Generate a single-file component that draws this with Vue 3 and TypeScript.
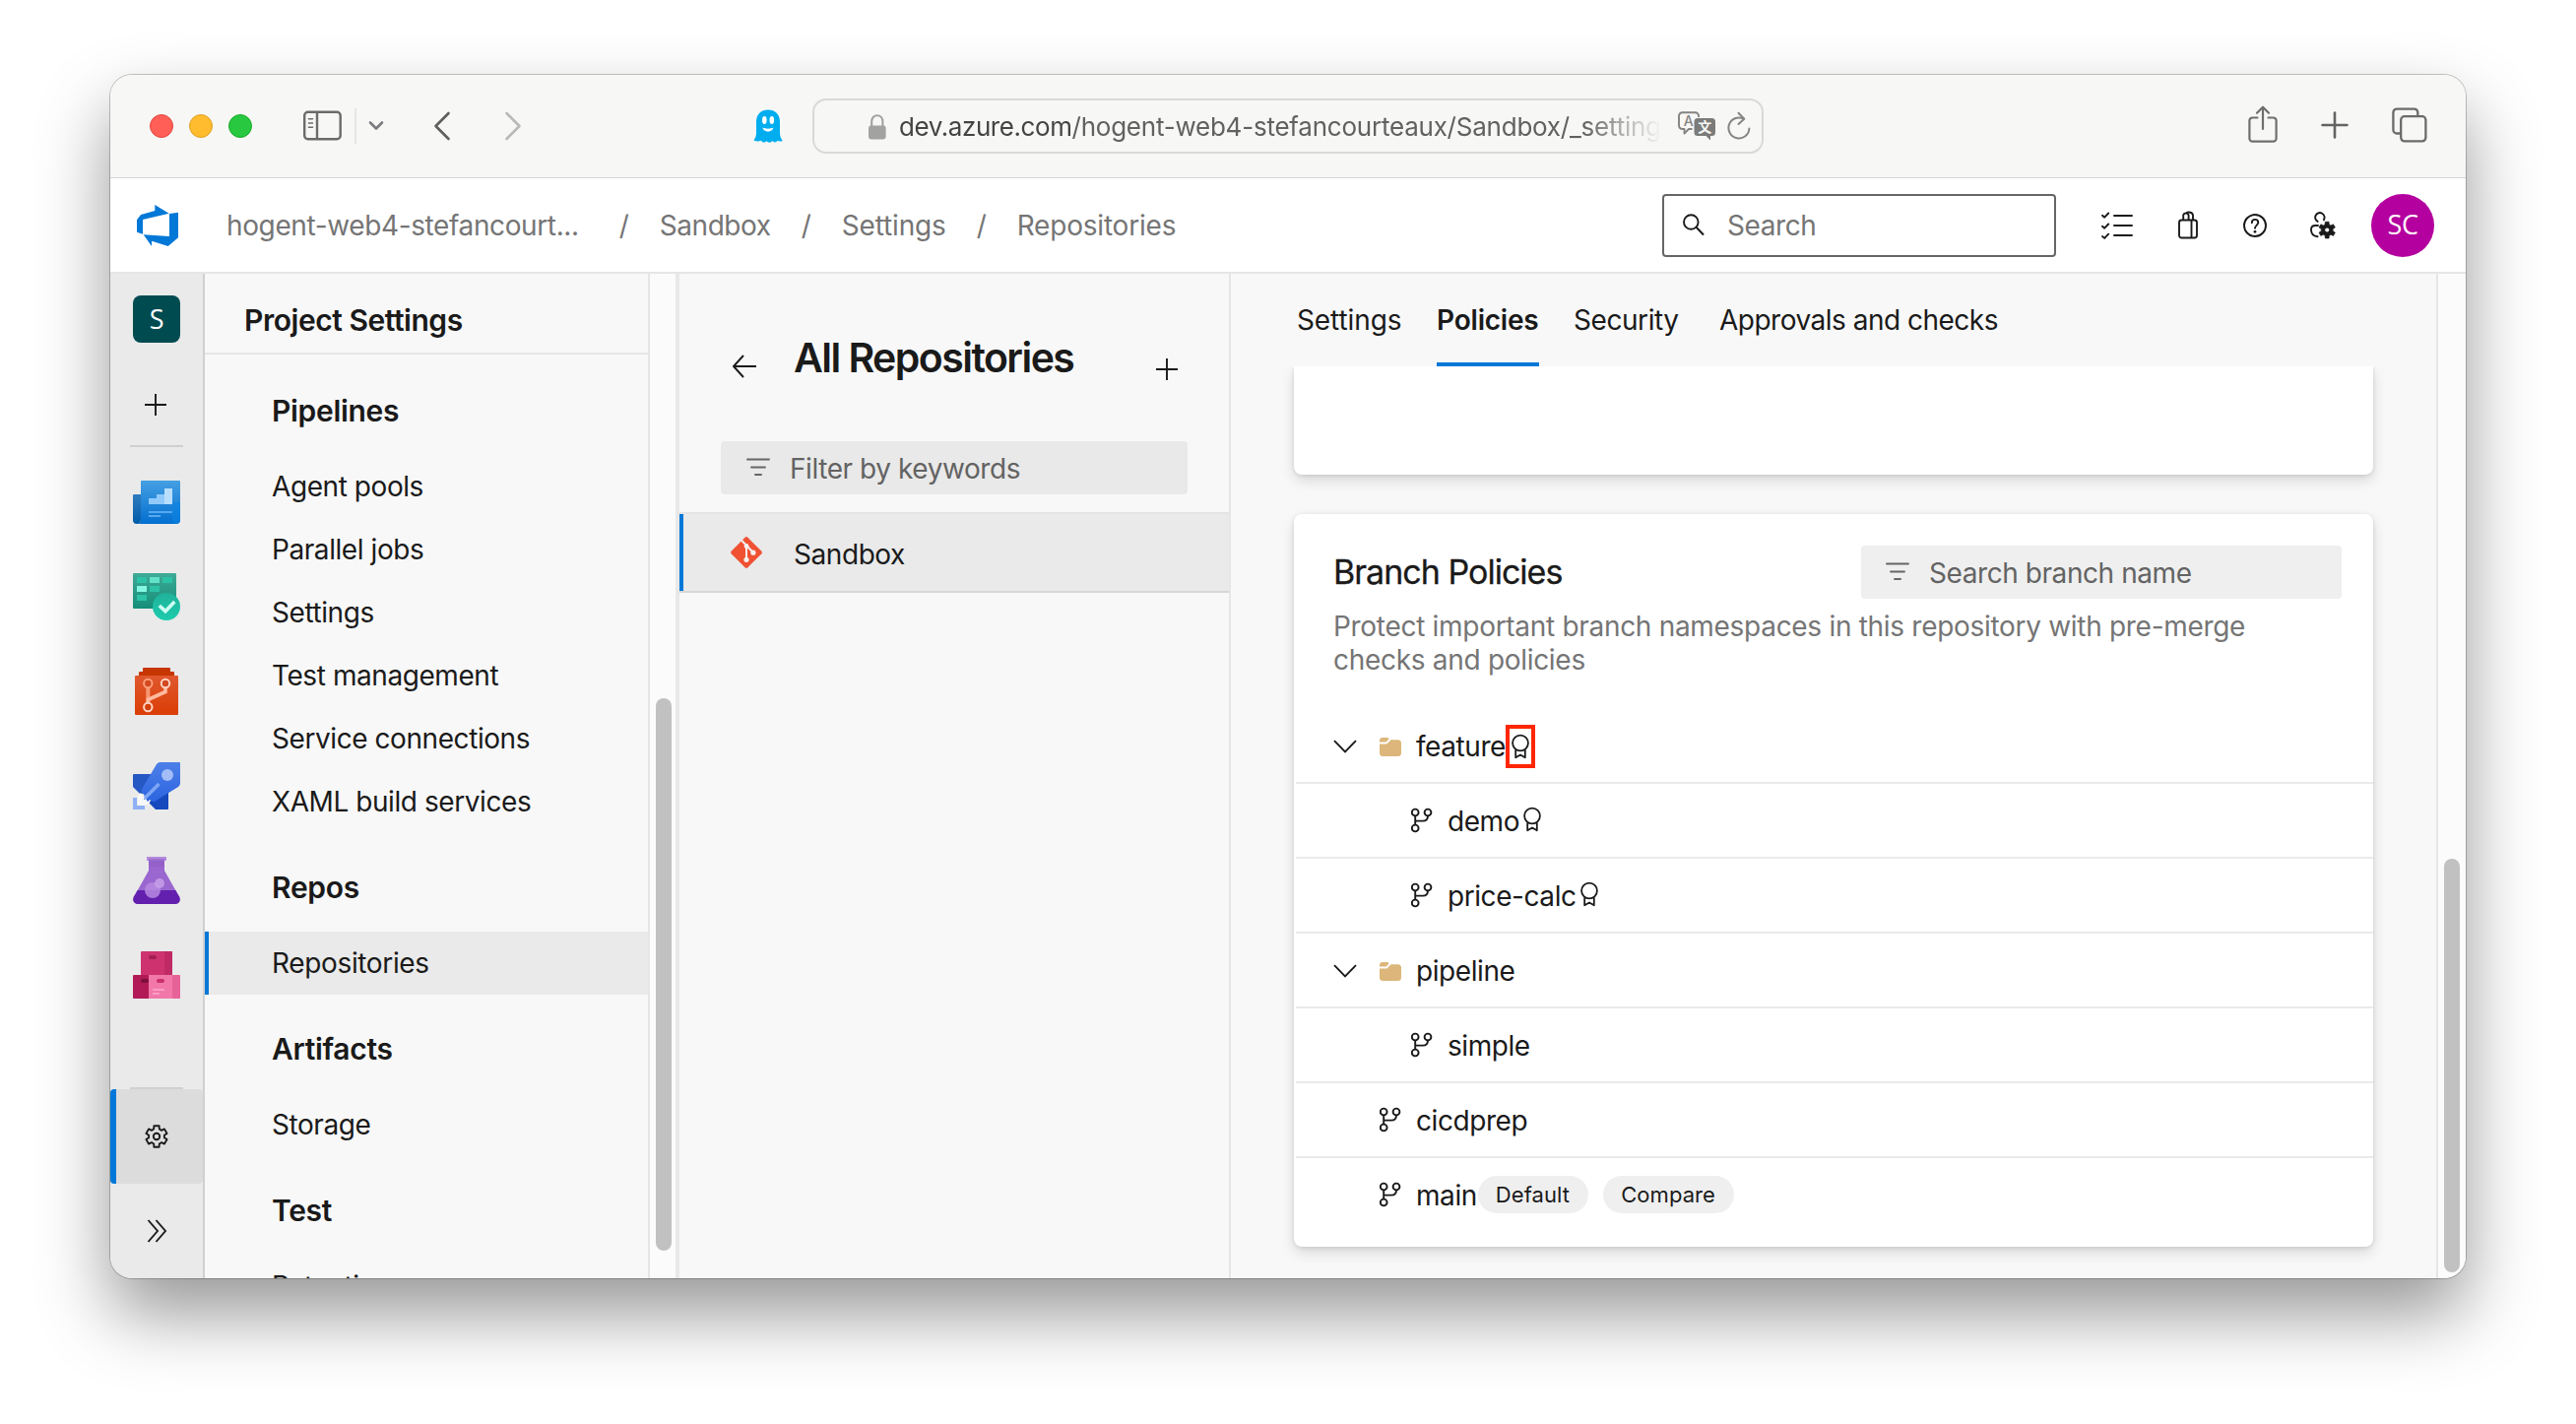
<script setup lang="ts">
interface Branch {
  name: string
  level: 0 | 1
  folder?: boolean
  policy?: boolean
  highlighted?: boolean
  pills?: string[]
}

const crumbs: string[] = ['hogent-web4-stefancourt...', 'Sandbox', 'Settings', 'Repositories']

const navGroups: { title: string; items: string[] }[] = [
  {
    title: 'Pipelines',
    items: ['Agent pools', 'Parallel jobs', 'Settings', 'Test management', 'Service connections', 'XAML build services'],
  },
  { title: 'Repos', items: ['Repositories'] },
  { title: 'Artifacts', items: ['Storage'] },
  { title: 'Test', items: ['Retention'] },
]
const activeNav = 'Repositories'

const tabs: string[] = ['Settings', 'Policies', 'Security', 'Approvals and checks']
const activeTab = 'Policies'

const branches: Branch[] = [
  { name: 'feature', level: 0, folder: true, policy: true, highlighted: true },
  { name: 'demo', level: 1, policy: true },
  { name: 'price-calc', level: 1, policy: true },
  { name: 'pipeline', level: 0, folder: true },
  { name: 'simple', level: 1 },
  { name: 'cicdprep', level: 0 },
  { name: 'main', level: 0, pills: ['Default', 'Compare'] },
]

/** Outline of a six-toothed gear centred on (c, c). */
function gearPath(c: number, outer: number, inner: number, top: number, root: number): string {
  const pts: string[] = []
  for (let i = 0; i < 6; i++) {
    const a = (i * Math.PI) / 3 - Math.PI / 2
    const corners: [number, number][] = [[a - root, inner], [a - top, outer], [a + top, outer], [a + root, inner]]
    for (const [t, r] of corners) pts.push(`${(c + r * Math.cos(t)).toFixed(2)} ${(c + r * Math.sin(t)).toFixed(2)}`)
  }
  return `M${pts.join('L')}Z`
}
const gear = gearPath(13, 11, 8, 0.24, 0.36)
const smallGear = gearPath(9, 8.6, 6, 0.22, 0.36)
</script>

<template>
  <div class="desktop">
    <svg class="defs" width="0" height="0">
      <symbol id="branch" viewBox="0 0 22 26">
        <g fill="none" stroke="#1a1a1a" stroke-width="1.9">
          <circle cx="4.2" cy="5" r="3.4" /><circle cx="17" cy="5" r="3.4" /><circle cx="4.2" cy="21" r="3.4" />
          <path d="M4.2 8.4V17.6M17 8.4c0 3.600-1.400 5.200-5 5.200H4.200" />
        </g>
      </symbol>
      <symbol id="ribbon" viewBox="0 0 20 26">
        <g fill="none" stroke="#1a1a1a" stroke-width="1.8">
          <circle cx="10" cy="9.500" r="7.900" />
          <path d="M5.200 16.200V24.300L10 21.500L14.800 24.300V16.200" stroke-linejoin="round" />
        </g>
      </symbol>
      <symbol id="filter" viewBox="0 0 24 18">
        <path d="M1 1.500H23M5 9.500H19M9 17H15" fill="none" stroke="#666" stroke-width="1.900" stroke-linecap="round" />
      </symbol>
      <symbol id="plus" viewBox="0 0 22 22">
        <path d="M11 0V22M0 11H22" stroke="#1a1a1a" stroke-width="1.900" />
      </symbol>
    </svg>

    <div class="window">
      <header class="toolbar">
        <span class="light red"></span><span class="light amber"></span><span class="light green"></span>
        <svg class="t-side" width="40" height="32" viewBox="0 0 40 32">
          <g fill="none" stroke="#6b6b6a" stroke-width="2.400">
            <rect x="1.200" y="1.700" width="36.500" height="27.600" rx="3.600" /><path d="M14 1.500V29.500" />
            <path d="M5.500 8.700H9.500M5.500 13H9.500M5.500 17.300H9.500" stroke-width="1.600" stroke-linecap="round" />
          </g>
        </svg>
        <span class="t-sep"></span>
        <svg class="t-chev" width="16" height="12" viewBox="0 0 16 12"><path d="M2 2.500L8 8.500L14 2.500" fill="none" stroke="#7b7b7f" stroke-width="2.600" stroke-linecap="round" stroke-linejoin="round" /></svg>
        <svg class="t-back" width="18" height="30" viewBox="0 0 18 30"><path d="M15.500 2L2.500 15L15.500 28" fill="none" stroke="#5e5e5d" stroke-width="2.600" stroke-linecap="round" stroke-linejoin="round" /></svg>
        <svg class="t-fwd" width="18" height="30" viewBox="0 0 18 30"><path d="M2.500 2L15.500 15L2.500 28" fill="none" stroke="#b9b9b8" stroke-width="2.600" stroke-linecap="round" stroke-linejoin="round" /></svg>
        <svg class="t-ghost" width="30" height="34" viewBox="0 0 30 34">
          <path d="M3 12.500C3 5 8 .4 15 .4S27 5 27 12.500V24c0 3.500 1 5 2.600 8-2 .8-3.300.7-4.900-.3-1.500 2.200-4 2.300-5.300.3-1.500 2.300-4.600 2.300-6 0-1.400 2.200-4 2.100-5.600-.2C5.500 33 3 32.700.4 31.600 2.400 28.600 3 27 3 24z" fill="#00aef0" />
          <ellipse cx="11.300" cy="11" rx="2.300" ry="4" fill="#fff" /><ellipse cx="18.800" cy="11" rx="2.300" ry="4" fill="#fff" />
          <path d="M9.300 18.500C12 20 18 20 20.500 18.500 19.500 24 10.500 24 9.300 18.500z" fill="#fff" />
        </svg>
        <div class="address">
          <svg class="lock" width="18" height="26" viewBox="0 0 18 26">
            <rect x="0" y="11.500" width="17.600" height="14" rx="2.400" fill="#a2a2a1" />
            <path d="M3.200 12V7.500C3.200 3.700 5.500 1.200 8.800 1.200S14.400 3.700 14.400 7.500V12" fill="none" stroke="#a2a2a1" stroke-width="2.100" />
          </svg>
          <div class="url"><span class="host">dev.azure.com</span><span class="path">/hogent-web4-stefancourteaux/Sandbox/_setting</span></div>
          <svg class="translate" width="38" height="30" viewBox="0 0 38 30">
            <path d="M21 6V5A3.500 3.500 0 0 0 17.500 1.200H4.500A3.500 3.500 0 0 0 1 4.700V14.500A3.500 3.500 0 0 0 4.500 18H6.500V22.500L11 18H14.500" fill="none" stroke="#838382" stroke-width="1.900" stroke-linejoin="round" />
            <path d="M20 7H34.500A3.500 3.500 0 0 1 38 10.500V21.500A3.500 3.500 0 0 1 34.500 25H33V29.500L28.500 25H20A3.500 3.500 0 0 1 16.500 21.500V10.500A3.500 3.500 0 0 1 20 7z" fill="#7b7b7a" />
            <text x="10.800" y="14.500" text-anchor="middle" class="g-latin">A</text>
            <text x="27.300" y="21.300" text-anchor="middle" class="g-cjk">文</text>
          </svg>
          <svg class="reload" width="24" height="30" viewBox="0 0 24 30">
            <path d="M16.500 7.500A10.500 10.500 0 1 0 22.400 17.500" fill="none" stroke="#858584" stroke-width="2" stroke-linecap="round" />
            <path d="M11.500 1.800L17.300 7.700L11.500 13" fill="none" stroke="#858584" stroke-width="2" stroke-linecap="round" stroke-linejoin="round" />
          </svg>
        </div>
        <svg class="t-share" width="30" height="38" viewBox="0 0 30 38">
          <g fill="none" stroke="#6f6f6e" stroke-width="2.200" stroke-linecap="round" stroke-linejoin="round">
            <path d="M9.500 12.500H4.500A3 3 0 0 0 1.400 15.500V33.500A3 3 0 0 0 4.500 36.600H25.500A3 3 0 0 0 28.600 33.500V15.500A3 3 0 0 0 25.500 12.500H20.500" />
            <path d="M15 24V2M9 7.700L15 1.700L21 7.700" />
          </g>
        </svg>
        <svg class="t-plus" width="28" height="28" viewBox="0 0 28 28"><path d="M14 1.500V26.500M1.500 14H26.500" stroke="#636362" stroke-width="2.600" stroke-linecap="round" /></svg>
        <svg class="t-tabs" width="36" height="36" viewBox="0 0 36 36">
          <g fill="none" stroke="#6b6b6a" stroke-width="2.300">
            <rect x="9.200" y="9.200" width="25.200" height="25.200" rx="3.600" />
            <path d="M9 26.500H5A3.600 3.600 0 0 1 1.400 22.900V5.200A3.600 3.600 0 0 1 5 1.600H22.700A3.600 3.600 0 0 1 26.300 5.200V9" />
          </g>
        </svg>
      </header>

      <div class="topbar">
        <svg class="logo" width="42" height="42" viewBox="0 0 42 42" fill="#0078d7">
          <path d="M0 15.300L4 10L18.300 6V0L32.700 8.700L6 15V29.700L0 27.700z" />
          <path d="M33 9L42 7.700V33.300L31.700 42L15 36.700V42L6.700 30.200L33 32z" />
        </svg>
        <nav class="crumbs">
          <template v-for="(c, i) in crumbs" :key="c">
            <span v-if="i" class="slash">/</span>
            <span class="crumb">{{ c }}</span>
          </template>
        </nav>
        <div class="search">
          <svg width="22" height="23" viewBox="0 0 22 23"><circle cx="8.300" cy="8.500" r="7.300" fill="none" stroke="#1a1a1a" stroke-width="1.900" /><path d="M13.600 13.800L21 21.500" stroke="#1a1a1a" stroke-width="2" /></svg>
          <span>Search</span>
        </div>
        <svg class="h-list" width="32" height="28" viewBox="0 0 32 28">
          <g fill="none" stroke="#1a1a1a" stroke-width="1.900" stroke-linecap="round" stroke-linejoin="round">
            <path d="M13 4H31M13 14H31M13 24H31" /><path d="M1 3.800L3.200 5.700L7.200 1.500M1 14.800L3.200 16.700L7.200 12.500M1 25L3.200 26.900L7.200 22.700" />
          </g>
        </svg>
        <svg class="h-bag" width="20" height="30" viewBox="0 0 20 30">
          <g fill="none" stroke="#1a1a1a" stroke-width="1.900">
            <rect x="1" y="9.500" width="18" height="18" rx="2.500" /><path d="M13.500 9.500V27.500" />
            <path d="M5.200 9.500V4.500A2.800 2.800 0 0 1 10.600 4.500V9.500M8 2.300C10.500 .8 15 1.500 15 5V9.500" />
          </g>
        </svg>
        <svg class="h-help" width="24" height="24" viewBox="0 0 24 24">
          <circle cx="12" cy="12" r="11" fill="none" stroke="#1a1a1a" stroke-width="1.900" />
          <path d="M8.800 9.200C8.800 7 10.200 5.900 12 5.900S15.300 7.100 15.300 9.100C15.300 11.500 12 11.800 12 14.800" fill="none" stroke="#1a1a1a" stroke-width="1.900" stroke-linecap="round" />
          <circle cx="12" cy="18.300" r="1.400" fill="#1a1a1a" />
        </svg>
        <svg class="h-user" width="26" height="28" viewBox="0 0 26 28">
          <path d="M7.600 9.900A4.700 4.700 0 1 1 13.900 8.200M8 14H5.500C2.300 14 1 15.900 1 18.200 1 21.500 3.200 24.600 7.500 25.300" fill="none" stroke="#1a1a1a" stroke-width="1.900" stroke-linecap="round" />
          <g transform="translate(8.200 9.600)"><path :d="smallGear" fill="#1a1a1a" stroke="#1a1a1a" stroke-width=".6" stroke-linejoin="round" /><circle cx="9" cy="9" r="2" fill="#fff" /></g>
        </svg>
        <span class="avatar">SC</span>
      </div>

      <div class="body">
        <aside class="rail">
          <span class="tile">S</span>
          <svg class="r-plus" width="22" height="22"><use href="#plus" /></svg>
          <span class="r-div"></span>
          <div class="products">
            <svg width="48" height="48" viewBox="0 0 48 48">
              <defs><linearGradient id="ov" x2="0" y2="1"><stop stop-color="#459fe3" /><stop offset="1" stop-color="#036fcf" /></linearGradient><linearGradient id="ov2" x2="0" y2="1"><stop stop-color="#2e7cc0" /><stop offset="1" stop-color="#005ba8" /></linearGradient></defs>
              <path d="M1 16H8V42a4 4 0 0 1-8 0V17a1 1 0 0 1 1-1z" fill="url(#ov2)" />
              <path d="M9 2H47a1 1 0 0 1 1 1V42a4 4 0 0 1-4 4H4a4 4 0 0 0 4-4V3a1 1 0 0 1 1-1z" fill="url(#ov)" />
              <path d="M40 24H48V42a4 4 0 0 1-8 0z" fill="#0a84e4" opacity=".6" />
              <path d="M16 20H24V26H16zM24 16H32V26H24z" fill="#90cafb" /><rect x="32" y="10" width="8" height="16" fill="#b9defd" />
              <path d="M16 33H40V35H16zM16 37H28V39H16z" fill="#54a8f0" />
            </svg>
            <svg width="48" height="48" viewBox="0 0 48 48">
              <defs><linearGradient id="bo" x2="0" y2="1"><stop stop-color="#3faa97" /><stop offset="1" stop-color="#148e78" /></linearGradient><linearGradient id="bo2" x2="0" y2="1"><stop stop-color="#20b29a" /><stop offset="1" stop-color="#1cccae" /></linearGradient></defs>
              <rect width="44" height="36" rx="1" fill="url(#bo)" />
              <path d="M4 4H14V10H4zM30 4H40V10H30zM17 13H27V19H17zM4 22H14V28H4z" fill="#2cc2a6" />
              <rect x="17" y="4" width="10" height="6" fill="#62e2c9" /><rect x="4" y="13" width="10" height="6" fill="#85f8e2" />
              <circle cx="34" cy="34" r="14" fill="url(#bo2)" />
              <path d="M26.800 33L33 38.700L42.300 29" fill="none" stroke="#ccfdf3" stroke-width="3.600" />
            </svg>
            <svg width="48" height="48" viewBox="0 0 48 48">
              <defs><linearGradient id="re" x2="0" y2="1"><stop stop-color="#e0582f" /><stop offset="1" stop-color="#db3d05" /></linearGradient></defs>
              <path d="M11 0H37a1 1 0 0 1 1 1V4H41a1 1 0 0 1 1 1V9H6V5A1 1 0 0 1 7 4H10V1A1 1 0 0 1 11 0z" fill="#c63600" />
              <rect x="2" y="8" width="44" height="40" rx="1" fill="url(#re)" />
              <path d="M15.300 20V36" stroke="#f79773" stroke-width="4" /><path d="M33 20V24.500L15.300 32.500V36" fill="none" stroke="#ffb99f" stroke-width="3.600" />
              <circle cx="15.300" cy="16" r="4.200" fill="#d2491f" stroke="#fb9d7b" stroke-width="2" /><circle cx="33" cy="16" r="4.200" fill="#d2491f" stroke="#ffd3c4" stroke-width="2" /><circle cx="15.300" cy="40" r="4.200" fill="#d2400d" stroke="#ffd3c4" stroke-width="2" />
            </svg>
            <svg width="48" height="48" viewBox="0 0 48 48">
              <defs><linearGradient id="pi" x2="0" y2="1"><stop stop-color="#4d80e8" /><stop offset="1" stop-color="#2b63e0" /></linearGradient></defs>
              <path d="M1 12H20L10 32H7L0 25V13A1 1 0 0 1 1 12z" fill="#2658c4" />
              <path d="M36 28V47A1 1 0 0 1 35 48H23L16 41L22 36z" fill="#1549bd" />
              <path d="M27 0H47A1 1 0 0 1 48 1V21C48 23 47 24 46 25L21 40.500L17 38L14 41L10 37L12 34L8 29L24 2C25 1 26 0 27 0z" fill="url(#pi)" />
              <path d="M26.500 22L12 36.500" stroke="#7fa6f5" stroke-width="3.600" />
              <circle cx="35" cy="13" r="6" fill="#a2bdf7" />
              <path d="M5 33.500L8 31L10 34L12 36L10.500 38.500L13 37L15 40L17.500 39.500L16 43L13 42.500L12 45L5 45z" fill="#f8f8f8" />
              <path d="M2 36V46H12" fill="none" stroke="#8fb0f6" stroke-width="4" />
            </svg>
            <svg width="48" height="48" viewBox="0 0 48 48">
              <path d="M16 4H32V14L41 30L44.500 36H3.500L7 30L16 14z" fill="#9a66cf" />
              <path d="M4.700 34H43.300L47.200 40.500C49.200 44.500 46.500 48 43 48H5C1.500 48-1.200 44.500.8 40.500z" fill="#6320ae" />
              <rect x="14" y="0" width="20" height="4" fill="#b389df" /><rect x="16" y="2" width="16" height="8" fill="#8f5dc4" opacity=".6" />
              <circle cx="20" cy="34" r="8" fill="#b689e2" opacity=".85" /><circle cx="27" cy="27" r="5" fill="#c9a4ea" opacity=".8" />
            </svg>
            <svg width="48" height="48" viewBox="0 0 48 48">
              <rect x="8" width="32" height="25" rx="1" fill="#ce3370" /><path d="M32 0H39A1 1 0 0 1 40 1V24H32z" fill="#bf2a66" />
              <path d="M1 24H16V48H1A1 1 0 0 1 0 47V25A1 1 0 0 1 1 24z" fill="#b21a57" />
              <path d="M16 24H47A1 1 0 0 1 48 25V47A1 1 0 0 1 47 48H16z" fill="#f178a9" /><path d="M40 24H47A1 1 0 0 1 48 25V47A1 1 0 0 1 47 48H40z" fill="#e8629a" />
              <rect x="16" y="4" width="8" height="4" rx="2" fill="#a31e55" /><rect x="8" y="28" width="8" height="4" rx="2" fill="#7d0f3c" /><rect x="24" y="28" width="8" height="4" rx="2" fill="#ca2f6c" />
              <path d="M20 38H32V40H20zM20 42H27V44H20z" fill="#fa9cc3" />
            </svg>
          </div>
          <span class="r-div bottom"></span>
          <div class="r-active">
            <svg width="26" height="26" viewBox="0 0 26 26"><g fill="none" stroke="#1a1a1a" stroke-width="1.900" stroke-linejoin="round"><path :d="gear" /><circle cx="13" cy="13" r="3.200" /></g></svg>
          </div>
          <div class="r-more">
            <svg width="22" height="24" viewBox="0 0 22 24"><path d="M2.500 1L12 12L2.500 23M10.500 1L20 12L10.500 23" fill="none" stroke="#1a1a1a" stroke-width="1.900" /></svg>
          </div>
        </aside>

        <section class="settings">
          <h2>Project Settings</h2>
          <div class="groups">
            <template v-for="g in navGroups" :key="g.title">
              <h3>{{ g.title }}</h3>
              <div v-for="item in g.items" :key="item" class="nav" :class="{ active: item === activeNav }">{{ item }}</div>
            </template>
          </div>
        </section>
        <div class="track left"><span></span></div>

        <section class="repos">
          <div class="repos-head">
            <svg class="back" width="26" height="24" viewBox="0 0 26 24"><path d="M12 1L2 12L12 23M2 12H25" fill="none" stroke="#1a1a1a" stroke-width="1.900" stroke-linejoin="round" /></svg>
            <h1>All Repositories</h1>
            <svg class="add" width="22" height="22"><use href="#plus" /></svg>
          </div>
          <div class="field keywords"><svg width="24" height="18"><use href="#filter" /></svg><span>Filter by keywords</span></div>
          <div class="repo">
            <svg width="32" height="32" viewBox="0 0 32 32">
              <path d="M17.400.8L31.200 14.600A2 2 0 0 1 31.200 17.400L17.400 31.200A2 2 0 0 1 14.600 31.200L.8 17.400A2 2 0 0 1 .8 14.600L14.600.8A2 2 0 0 1 17.400.8z" fill="#f05133" />
              <path d="M11.200 3.800L16 8.800V23M16.200 9L23.200 16.500" fill="none" stroke="#f6f1ef" stroke-width="2" />
              <circle cx="16" cy="9.500" r="2.400" fill="#f6f1ef" /><circle cx="16" cy="23.300" r="2.600" fill="#f6f1ef" /><circle cx="22.900" cy="16.200" r="2.600" fill="#f6f1ef" />
            </svg>
            <span>Sandbox</span>
          </div>
        </section>

        <main class="main">
          <nav class="tabs">
            <span v-for="t in tabs" :key="t" class="tab" :class="{ active: t === activeTab }">{{ t }}</span>
          </nav>
          <div class="scroll">
            <div class="card previous"></div>
            <div class="card">
              <div class="card-head">
                <h4>Branch Policies</h4>
                <div class="field branch-search"><svg width="24" height="18"><use href="#filter" /></svg><span>Search branch name</span></div>
              </div>
              <p>Protect important branch namespaces in this repository with pre-merge<br />checks and policies</p>
              <div class="rows">
                <div v-for="b in branches" :key="b.name" class="row" :class="{ child: b.level === 1 }">
                  <span class="toggle">
                    <svg v-if="b.folder" width="24" height="14" viewBox="0 0 24 14"><path d="M1 1.200L12 12.400L23 1.200" fill="none" stroke="#1a1a1a" stroke-width="1.900" /></svg>
                  </span>
                  <svg v-if="b.folder" class="kind" width="22" height="26" viewBox="0 0 22 26">
                    <path d="M0 9.800V8A3 3 0 0 1 3 5H8.500L9.600 6.200L6.800 9.500H0zM0 11.400H7.400L11.600 7.200H18.500A3.500 3.500 0 0 1 22 10.700V20.500A3.500 3.500 0 0 1 18.500 24H3.500A3.500 3.500 0 0 1 0 20.500z" fill="#dcb67a" />
                  </svg>
                  <svg v-else class="kind" width="22" height="26"><use href="#branch" /></svg>
                  <span class="name">{{ b.name }}</span>
                  <span v-if="b.policy" class="policy" :class="{ marked: b.highlighted }"><svg width="20" height="26"><use href="#ribbon" /></svg></span>
                  <span v-for="p in b.pills" :key="p" class="pill">{{ p }}</span>
                </div>
              </div>
            </div>
          </div>
        </main>
        <div class="track right"><span></span></div>
      </div>
    </div>
  </div>
</template>

<style>
body { margin: 0; background: #fff; }
</style>

<style scoped>
* { box-sizing: border-box; }
svg { display: block; flex: none; }
.defs { position: absolute; }
.desktop {
  width: 2616px; height: 1446px; padding: 76px 112px 0; overflow: hidden; background: #fff;
  font-family: Inter, "Noto Sans", sans-serif; font-size: 28px; letter-spacing: -0.43px; color: #1a1a1a; white-space: nowrap;
}
.window {
  width: 2392px; height: 1222px; border-radius: 22px; overflow: hidden; background: #f8f8f8; display: flex; flex-direction: column;
  box-shadow: 0 0 0 1px rgba(0, 0, 0, .22), 0 36px 72px rgba(0, 0, 0, .41);
}

.toolbar { height: 105px; flex: none; display: flex; align-items: center; padding: 0 39px 0 40px; background: #f7f7f5; border-bottom: 1px solid #d6d6d5; }
.light { width: 24px; height: 24px; border-radius: 50%; margin-right: 16px; flex: none; }
.red { background: #ff5f57; border: 1px solid #e2463f; }
.amber { background: #febc2e; border: 1px solid #e0a023; }
.green { background: #28c840; border: 1px solid #1aab29; }
.t-side { margin-left: 36px; }
.t-sep { width: 2px; height: 36px; background: #e6e6e5; margin-left: 12px; }
.t-chev { margin-left: 12px; }
.t-back { margin-left: 50px; }
.t-fwd { margin-left: 54px; }
.t-ghost { margin-left: 235px; }
.address { width: 966px; height: 56px; margin-left: 30px; border: 2px solid #d9d9d8; border-radius: 14px; display: flex; align-items: center; flex: none; }
.lock { margin: 2px 0 0 55px; }
.url {
  width: 775px; margin-left: 12px; padding: 1px 0 0 1px; overflow: hidden; font-size: 26px; line-height: 40px; color: #616160; flex: none;
  -webkit-mask-image: linear-gradient(90deg, #000 695px, transparent 775px); mask-image: linear-gradient(90deg, #000 695px, transparent 775px);
}
.host { color: #444443; }
.path { letter-spacing: -0.23px; }
.translate { margin-left: 17px; }
.g-latin { font: 500 14px Inter, sans-serif; fill: #838382; letter-spacing: 0; }
.g-cjk { font: 700 14px "Noto Sans CJK SC", sans-serif; fill: #f7f7f5; letter-spacing: 0; }
.reload { margin-left: 12px; }
.t-share { margin-left: auto; margin-top: -5px; }
.t-plus { margin-left: 44px; margin-top: -3px; }
.t-tabs { margin-left: 44px; margin-top: -3px; }

.topbar { height: 97px; flex: none; display: flex; align-items: center; background: #fff; border-bottom: 2px solid #e6e6e6; padding: 0 32px 0 27px; }
.crumbs { display: flex; margin-left: 49px; color: #757575; }
.slash { width: 72px; text-align: center; }
.crumb:first-child { margin-right: 10px; letter-spacing: -0.38px; }
.crumb:nth-of-type(5) { letter-spacing: -0.15px; }
.crumb:last-child { letter-spacing: -0.2px; }
.search { width: 400px; height: 64px; margin-left: auto; border: 2px solid #666; border-radius: 4px; display: flex; align-items: center; padding-left: 19px; color: #757575; }
.search span { margin-left: 23px; }
.h-list { margin-left: 46px; }
.h-bag { margin-left: 46px; }
.h-help { margin-left: 46px; }
.h-user { margin-left: 44px; }
.avatar { width: 64px; height: 64px; margin-left: 36px; border-radius: 50%; background: #b4009e; color: #fff; font: 27px/62px "Open Sans", sans-serif; text-align: center; flex: none; }

.body { flex: 1; min-height: 0; display: flex; }
.rail { width: 96px; flex: none; background: #eaeaea; border-right: 2px solid #d0d0d0; display: flex; flex-direction: column; align-items: center; padding-top: 22px; }
.tile { width: 48px; height: 48px; border-radius: 8px; background: #004b50; color: #fff; font: 27px/48px "Open Sans", sans-serif; text-align: center; flex: none; }
.r-plus { margin: 52px 2px 0 0; }
.r-div { width: 54px; height: 2px; background: #d0d0d0; margin-top: 30px; flex: none; }
.products { display: flex; flex-direction: column; gap: 48px; margin-top: 32px; }
.r-div.bottom { margin-top: auto; }
.r-active { width: 94px; height: 96px; flex: none; background: #dcdcdc; border-left: 6px solid #0078d7; border-radius: 4px; display: flex; align-items: center; justify-content: center; padding-right: 6px; }
.r-more { height: 96px; flex: none; display: flex; align-items: center; }

.settings { width: 450px; flex: none; overflow: hidden; }
h1, h2, h3, h4, p { margin: 0; font-weight: 600; }
h2 { height: 82px; padding: 14px 0 0 40px; border-bottom: 2px solid #e6e6e6; font-size: 30px; line-height: 66px; letter-spacing: -0.46px; }
.groups { padding-top: 2px; }
h3 { height: 100px; padding: 35px 0 0 68px; font-size: 30px; line-height: 40px; letter-spacing: -0.3px; }
.nav { height: 64px; padding-left: 68px; line-height: 64px; }
.nav.active { background: #eaeaea; border-left: 4px solid #0078d7; padding-left: 64px; letter-spacing: -0.35px; }

.track { flex: none; background: #fbfbfb; border-left: 2px solid #e6e6e6; }
.track span { display: block; width: 16px; margin-left: 6px; border-radius: 8px; background: #c1c1c1; }
.track.left { width: 32px; border-right: 4px solid #e8e8e8; }
.track.left span { height: 561px; margin-top: 431px; }
.track.right { width: 30px; }
.track.right span { height: 420px; margin-top: 594px; }

.repos { width: 560px; flex: none; border-right: 2px solid #e6e6e6; }
.repos-head { display: flex; height: 170px; }
.back { margin: 82px 0 0 53px; }
h1 { width: 370px; margin: 60px 0 0 37px; font-size: 41px; line-height: 50px; letter-spacing: -1.55px; }
.add { margin: 86px 0 0 -2px; }
.field { height: 54px; border-radius: 4px; background: #e9e9e9; display: flex; align-items: center; color: #636363; }
.field svg { margin-top: -3px; }
.keywords { width: 474px; margin-left: 42px; padding-left: 26px; }
.keywords span { margin: 1px 0 0 20px; }
.repo { height: 82px; margin-top: 18px; border-top: 2px solid #e4e4e4; border-bottom: 2px solid #d6d6d6; background: #eaeaea; display: flex; align-items: center; padding-left: 52px; box-shadow: inset 4px 0 #0078d7; }
.repo span { margin: 3px 0 0 32px; }

.main { flex: 1; min-width: 0; display: flex; flex-direction: column; }
.tabs { height: 94px; flex: none; display: flex; gap: 34px; padding-left: 67px; }
.tab { height: 94px; padding-top: 4px; border-bottom: 4px solid transparent; line-height: 86px; }
.tab:nth-child(1) { width: 108px; letter-spacing: -0.1px; }
.tab:nth-child(2) { width: 104px; }
.tab:nth-child(3) { width: 115px; padding-left: 1px; }
.tab:nth-child(4) { letter-spacing: -0.5px; }
.tab.active { font-weight: 600; letter-spacing: -0.2px; border-color: #0078d7; }
.scroll { flex: 1; min-height: 0; overflow: hidden; padding: 0 64px; }
.card { height: 744px; margin-top: 40px; background: #fff; border-radius: 8px; box-shadow: 0 6px 14px rgba(0, 0, 0, .13), 0 1px 4px rgba(0, 0, 0, .11); }
.card.previous { height: 110px; margin-top: 0; border-radius: 0 0 8px 8px; }
.card-head { display: flex; justify-content: space-between; padding: 32px 32px 0 40px; }
h4 { font-size: 34px; font-weight: 400; line-height: 54px; letter-spacing: -0.98px; -webkit-text-stroke: .3px #1a1a1a; }
.branch-search { width: 488px; background: #efefef; padding-left: 25px; }
.branch-search span { margin: 1px 0 0 20px; }
p { margin: 11px 0 0 40px; height: 101px; font-weight: 400; line-height: 34px; letter-spacing: -0.3px; color: #757575; }
.row { height: 76px; display: flex; align-items: center; padding: 2px 0 0 40px; margin: 0 0 0 2px; border-bottom: 2px solid #eaeaea; }
.row:last-child { border-bottom-color: transparent; }
.row.child { padding-left: 70px; }
.toggle { width: 47px; margin-left: -2px; flex: none; }
.kind { margin-top: -3px; }
.name { margin-left: 15px; }
.row.child .toggle { width: 49px; }
.policy { margin: -5px 0 0 3px; }
.policy.marked { margin: 0; padding: 5px 1px 5px; border: 4px solid #ff2600; height: 44px; width: 30px; }
.pill { height: 38px; border-radius: 19px; background: #efefef; font-size: 22px; line-height: 39px; letter-spacing: .08px; padding: 0 19px 0 18px; margin: -2px 0 0 1px; }
.pill + .pill { margin-left: 15px; }
</style>
